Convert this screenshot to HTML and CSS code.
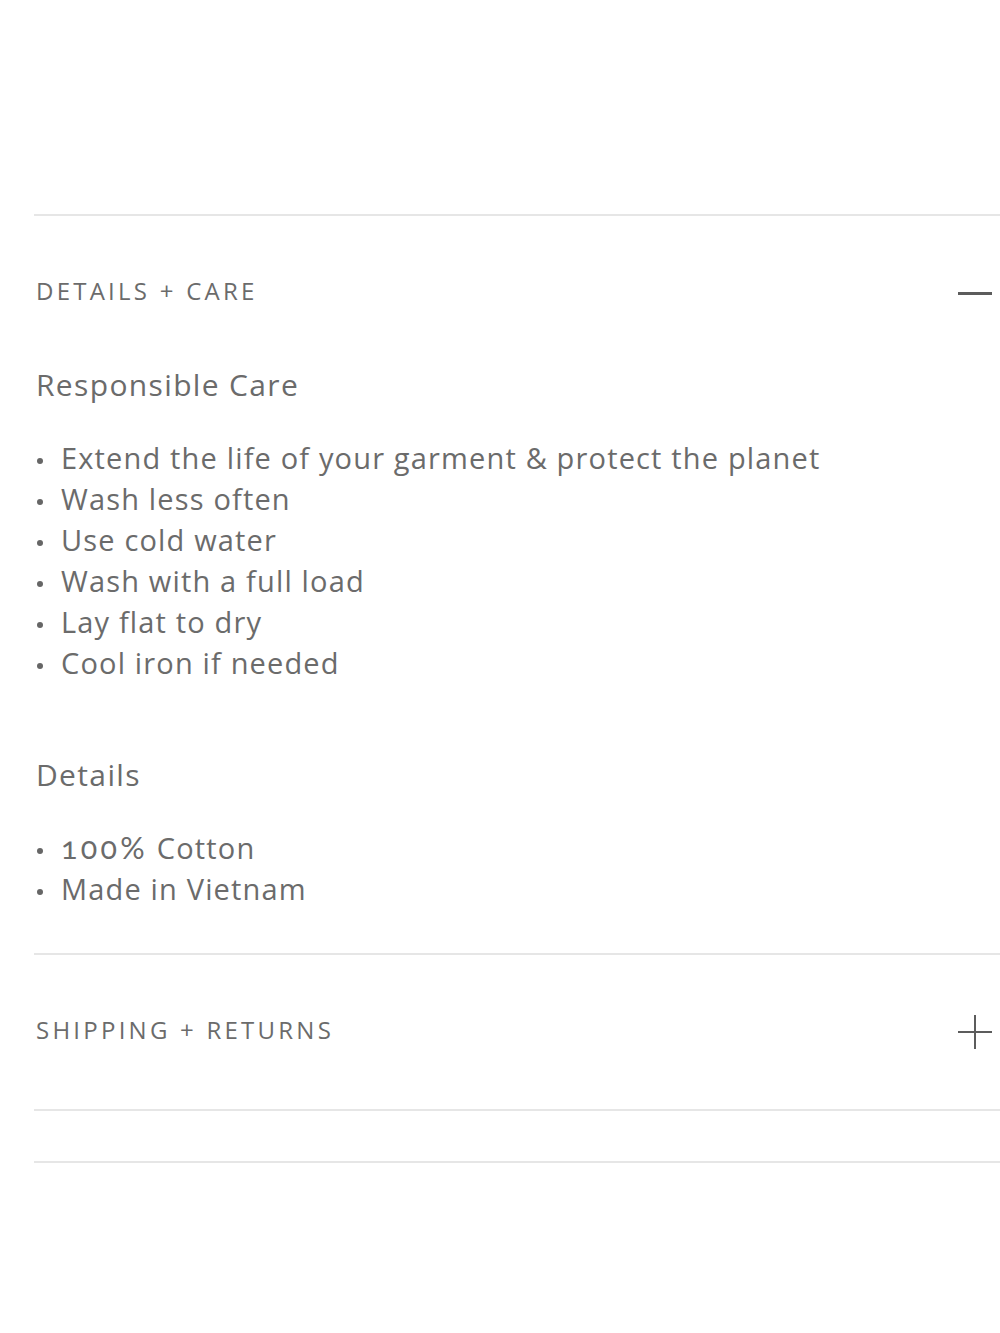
FILE: index.html
```html
<!DOCTYPE html>
<html>
<head>
<meta charset="utf-8">
<link rel="stylesheet" href="styles.css">
</head>
<body>
<div class="accordion">
  <section class="panel open">
    <div class="panel-head">
      <span class="panel-title">DETAILS + CARE</span>
      <span class="icon minus"></span>
    </div>
    <div class="panel-body">
      <h3 class="sub">Responsible Care</h3>
      <ul class="bullets">
        <li>Extend the life of your garment &amp; protect the planet</li>
        <li>Wash less often</li>
        <li>Use cold water</li>
        <li>Wash with a full load</li>
        <li>Lay flat to dry</li>
        <li>Cool iron if needed</li>
      </ul>
      <h3 class="sub sub-second">Details</h3>
      <ul class="bullets">
        <li><span class="oldnum">100%</span> Cotton</li>
        <li>Made in Vietnam</li>
      </ul>
    </div>
  </section>
  <section class="panel">
    <div class="panel-head">
      <span class="panel-title">SHIPPING + RETURNS</span>
      <span class="icon plus"></span>
    </div>
  </section>
  <section class="panel empty"></section>
  <div class="end-rule"></div>
</div>
</body>
</html>
```
FILE: styles.css
```css
html, body {
  margin: 0;
  padding: 0;
  background: #ffffff;
}
body {
  font-family: "Open Sans", Lato, sans-serif;
  color: #6b6b6b;
}
.accordion {
  padding: 214px 0 0 34px;
}
.panel {
  border-top: 2px solid #e6e6e6;
}
.panel-head {
  height: 154px;
  display: flex;
  align-items: center;
  justify-content: space-between;
  padding: 0 8px 0 2px;
}
.panel-title {
  font-size: 24px;
  letter-spacing: 0.135em;
  line-height: 1;
  margin-top: -4px;
}
.icon {
  position: relative;
  width: 34px;
  height: 34px;
}
.icon::before, .icon::after {
  content: "";
  position: absolute;
  background: #5c5c5c;
}
.minus::before {
  left: 0;
  right: 0;
  top: 16px;
  height: 2.5px;
}
.plus::before {
  left: 0;
  right: 0;
  top: 16px;
  height: 2px;
}
.plus::after {
  top: 0;
  bottom: 0;
  left: 16px;
  width: 2px;
}
.panel-body {
  padding: 0 0 44px 2px;
  margin-top: -2px;
}
.sub {
  margin: 0;
  font-weight: 400;
  font-size: 30px;
  line-height: 34px;
  letter-spacing: 0.045em;
}
.sub-second {
  margin-top: 75px;
}
.bullets {
  list-style: none;
  margin: 35px 0 0;
  padding: 0;
}
.bullets li {
  font-size: 29px;
  line-height: 41px;
  letter-spacing: 0.04em;
  position: relative;
  padding-left: 25px;
}
.bullets li::before {
  content: "";
  position: absolute;
  left: 1px;
  top: 21px;
  width: 6px;
  height: 6px;
  border-radius: 50%;
  background: #666666;
}
.oldnum {
  font-family: Lato, "Open Sans", sans-serif;
  font-variant-numeric: oldstyle-nums;
  font-size: 1.05em;
  letter-spacing: 0.11em;
}
.empty {
  height: 50px;
}
.end-rule {
  border-top: 2px solid #e6e6e6;
}
```
